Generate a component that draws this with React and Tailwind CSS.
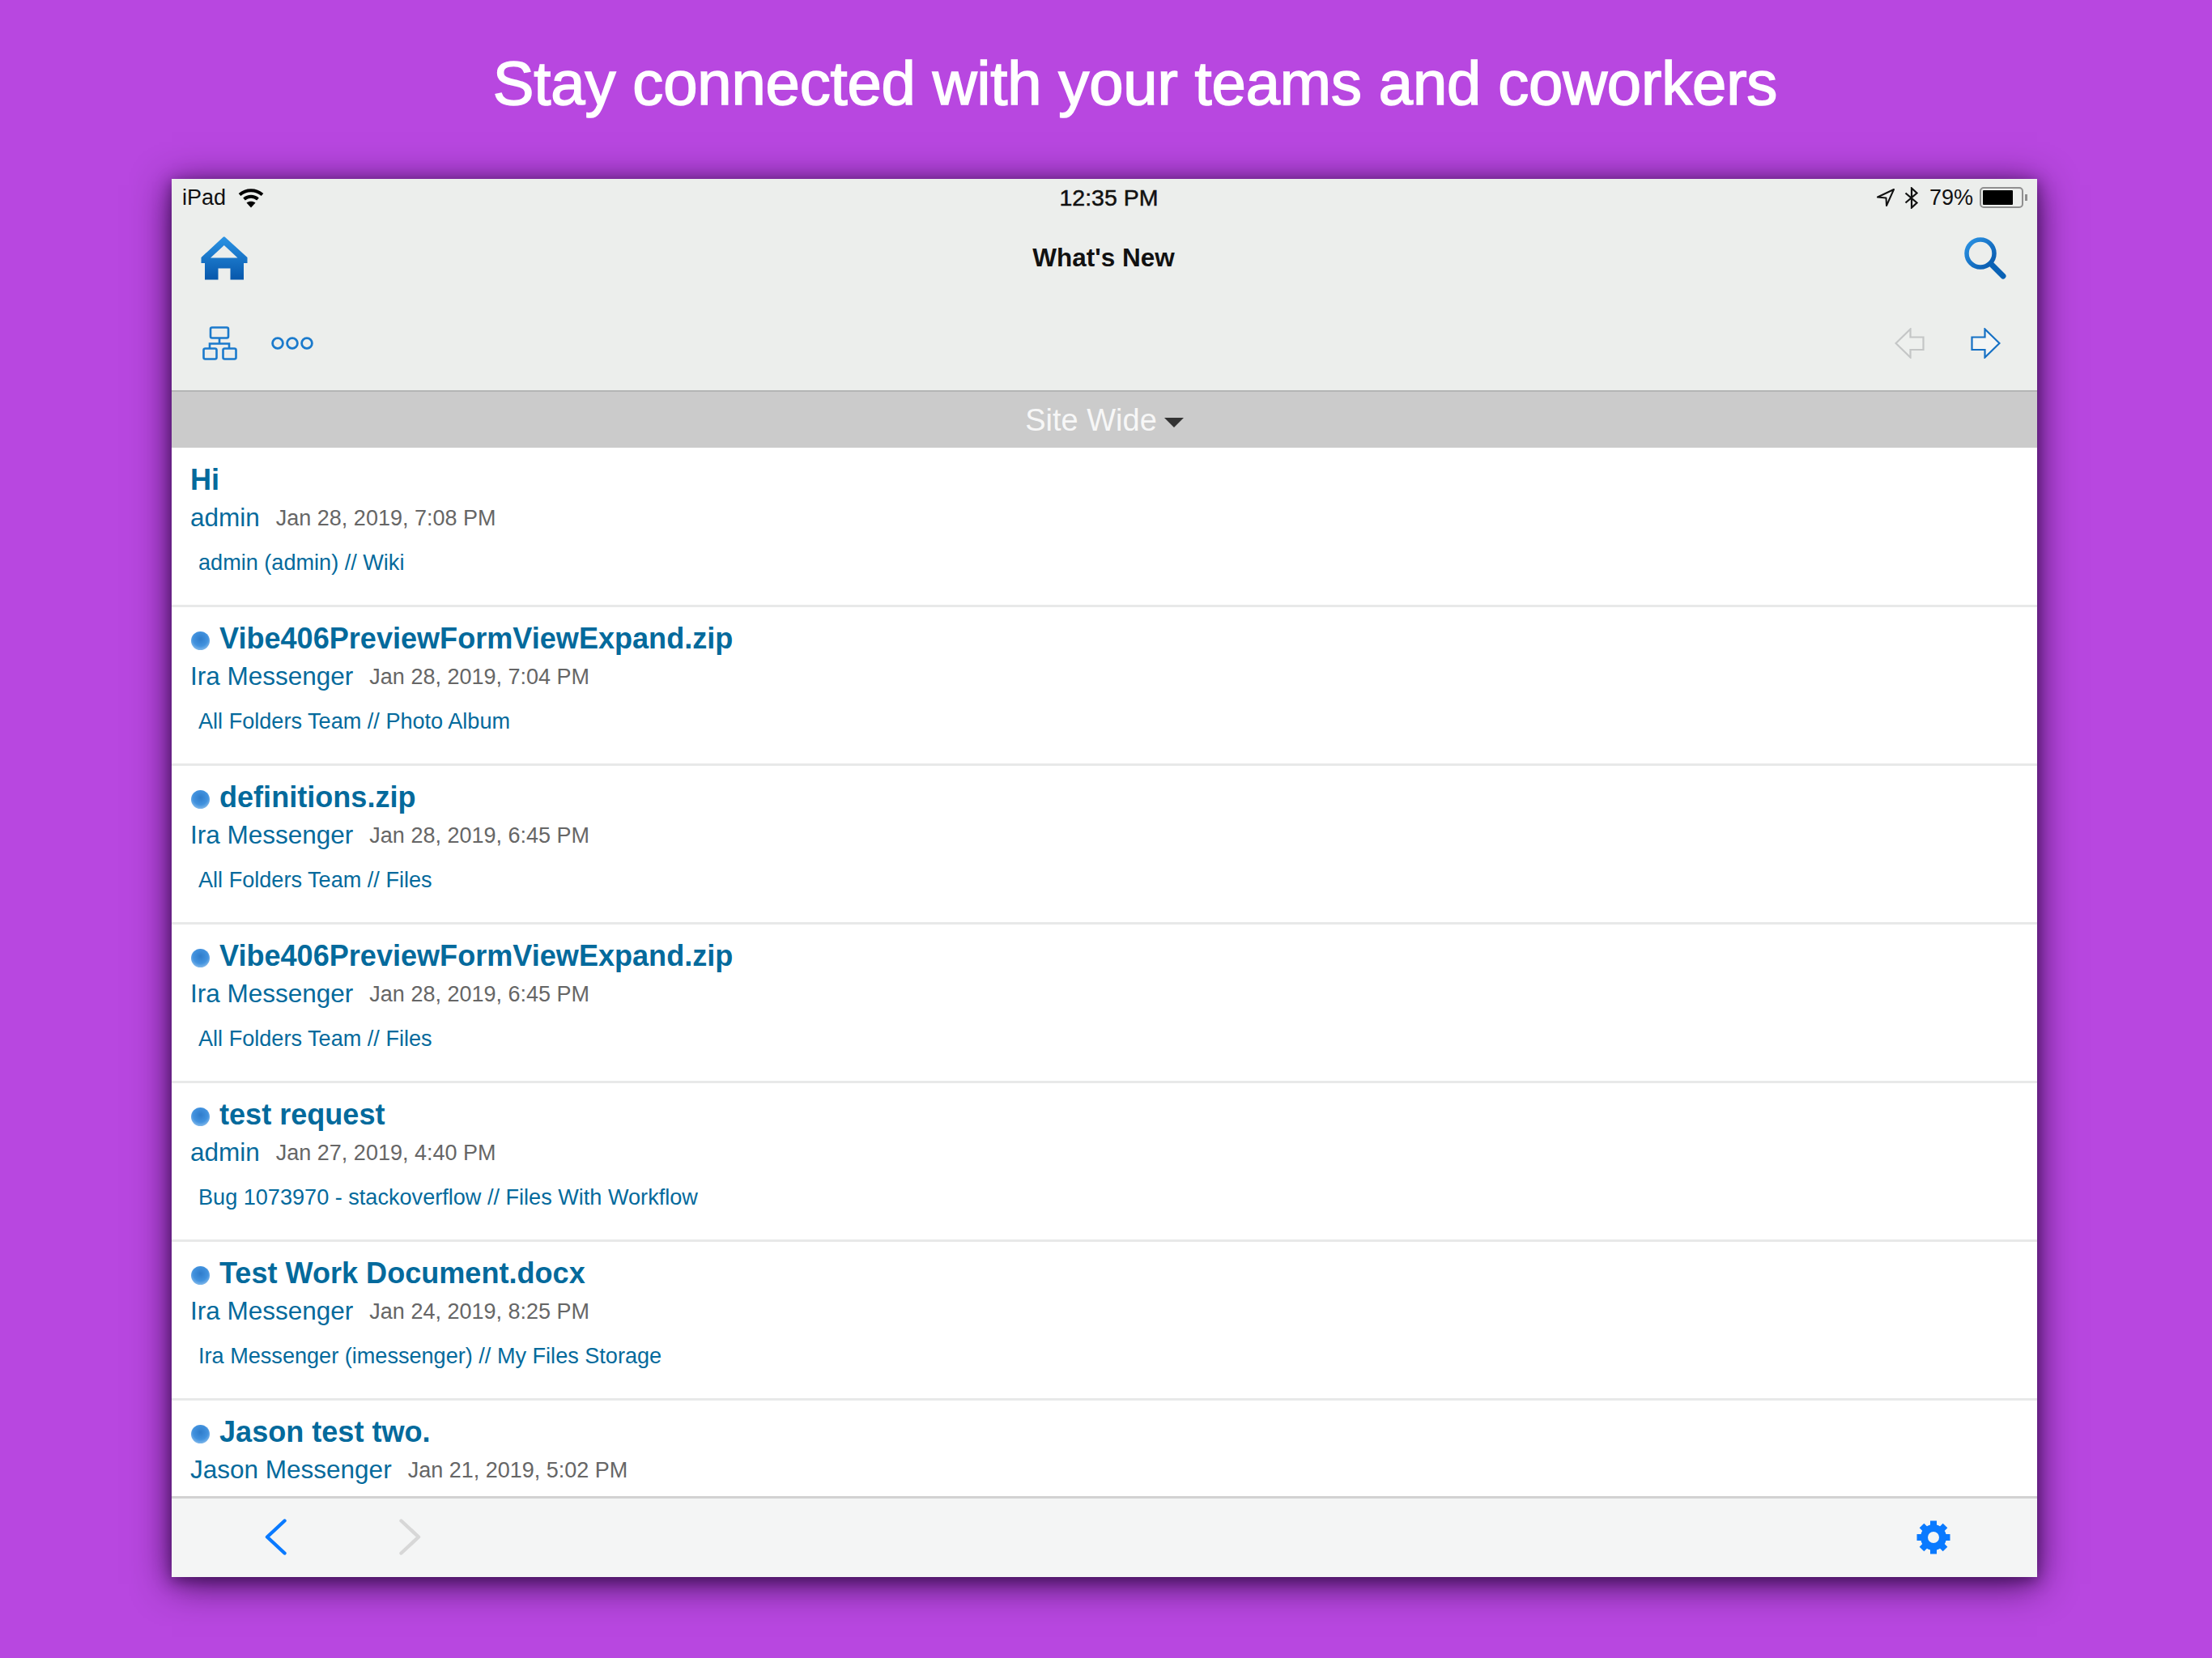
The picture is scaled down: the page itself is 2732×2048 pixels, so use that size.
const rows = [
  { t: "Hi", dot: false, a: "admin", d: "Jan 28, 2019, 7:08 PM", p: "admin (admin) // Wiki" },
  { t: "Vibe406PreviewFormViewExpand.zip", dot: true, a: "Ira Messenger", d: "Jan 28, 2019, 7:04 PM", p: "All Folders Team // Photo Album" },
  { t: "definitions.zip", dot: true, a: "Ira Messenger", d: "Jan 28, 2019, 6:45 PM", p: "All Folders Team // Files" },
  { t: "Vibe406PreviewFormViewExpand.zip", dot: true, a: "Ira Messenger", d: "Jan 28, 2019, 6:45 PM", p: "All Folders Team // Files" },
  { t: "test request", dot: true, a: "admin", d: "Jan 27, 2019, 4:40 PM", p: "Bug 1073970 - stackoverflow // Files With Workflow" },
  { t: "Test Work Document.docx", dot: true, a: "Ira Messenger", d: "Jan 24, 2019, 8:25 PM", p: "Ira Messenger (imessenger) // My Files Storage" },
  { t: "Jason test two.", dot: true, a: "Jason Messenger", d: "Jan 21, 2019, 5:02 PM", p: "" },
];

function Wifi() {
  return (
    <svg width="32" height="25" viewBox="0 0 32 25" fill="none" stroke="#000" strokeWidth="4">
      <path d="M2 8.5C10 1.5 22 1.5 30 8.5" />
      <path d="M7.5 14C12.5 9.7 19.5 9.7 24.5 14" />
      <path d="M16 24.5L10.5 18.5C13.5 16 18.5 16 21.5 18.5Z" fill="#000" stroke="none" />
    </svg>
  );
}

function Home() {
  return (
    <svg width="58" height="54" viewBox="0 0 58 54">
      <defs>
        <linearGradient id="hg" x1="0" y1="0" x2="0" y2="1">
          <stop offset="0" stopColor="#2b93e4" />
          <stop offset="1" stopColor="#0757ab" />
        </linearGradient>
      </defs>
      <path
        fillRule="evenodd"
        fill="url(#hg)"
        d="M28 0.5L29.5 0.5L57.5 26V33H53V53.5H36.5V39.5H21.5V53.5H5V33H0.5V26ZM28.8 11L12 26.5H45.5Z"
      />
    </svg>
  );
}

function Search() {
  return (
    <svg width="52" height="52" viewBox="0 0 52 52" fill="none">
      <defs>
        <linearGradient id="sg" x1="0" y1="0" x2="1" y2="1">
          <stop offset="0" stopColor="#2b93e4" />
          <stop offset="1" stopColor="#0757ab" />
        </linearGradient>
      </defs>
      <circle cx="20" cy="20" r="17" stroke="url(#sg)" strokeWidth="5.5" />
      <path d="M33 33L48 48" stroke="#0a62b5" strokeWidth="7" strokeLinecap="round" />
    </svg>
  );
}

function Org() {
  return (
    <svg width="44" height="42" viewBox="0 0 44 42" fill="none" stroke="#1b7acc" strokeWidth="2.6">
      <rect x="10" y="1.5" width="22" height="13" rx="2" />
      <path d="M21 14.5V21M9 27V21.5H33V27" />
      <rect x="1.5" y="27.5" width="16" height="13" rx="2" />
      <rect x="25.5" y="27.5" width="16" height="13" rx="2" />
    </svg>
  );
}

function Dots() {
  return (
    <svg width="52" height="18" viewBox="0 0 52 18" fill="none" stroke="#1b7acc" strokeWidth="2.8">
      <circle cx="8" cy="9" r="6.4" />
      <circle cx="26" cy="9" r="6.4" />
      <circle cx="44" cy="9" r="6.4" />
    </svg>
  );
}

function ArrowR({ color, flip, fill }) {
  return (
    <svg width="37" height="38" viewBox="0 0 37 38" fill={fill} stroke={color} strokeWidth="2.2" className={flip ? "-scale-x-100" : ""}>
      <path d="M1.5 11.5H17.5V1.5L35.5 19L17.5 36.5V27H1.5Z" />
    </svg>
  );
}

function Gear() {
  const teeth = [0, 45, 90, 135, 180, 225, 270, 315];
  return (
    <svg width="42" height="42" viewBox="0 0 42 42">
      {teeth.map((a) => (
        <rect key={a} x="17" y="0.5" width="8" height="9" fill="#0a7aff" transform={`rotate(${a} 21 21)`} />
      ))}
      <circle cx="21" cy="21" r="11.5" fill="none" stroke="#0a7aff" strokeWidth="9" />
    </svg>
  );
}

function Chevron({ color, flip }) {
  return (
    <svg width="27" height="45" viewBox="0 0 27 45" fill="none" stroke={color} strokeWidth="4.4" strokeLinecap="round" strokeLinejoin="round" className={flip ? "-scale-x-100" : ""}>
      <path d="M24.5 2.5L3 22.5L24.5 42.5" />
    </svg>
  );
}

function Location() {
  return (
    <svg width="22" height="22" viewBox="0 0 22 22" fill="none" stroke="#111" strokeWidth="2" strokeLinejoin="round">
      <path d="M21 1L1 10.5L11.5 11.5L12 21Z" />
    </svg>
  );
}

function Bt() {
  return (
    <svg width="18" height="27" viewBox="0 0 18 27" fill="none" stroke="#111" strokeWidth="2.2">
      <path d="M1.5 7.5L15.5 19.5L9 25.5V1.5L15.5 7.5L1.5 19.5" />
    </svg>
  );
}

function Battery() {
  return (
    <div className="flex items-center">
      <div className="flex h-[26px] w-[54px] items-center rounded-[5px] border-2 border-[#8f8f8f] p-[2px]">
        <div className="h-full w-[37px] rounded-[1px] bg-black" />
      </div>
      <div className="ml-[2px] h-[8px] w-[3px] bg-[#8f8f8f]" />
    </div>
  );
}

function Row({ r }) {
  return (
    <div className="h-[196px] shrink-0 border-b-[3px] border-[#e8e9e9] pl-[23px] pt-[17px]">
      <div className="flex h-[44px] items-center text-[36.1px] font-bold leading-[44px] text-[#046a9c]">
        {r.dot && (
          <span className="mr-[12px] ml-[1px] mt-[4px] h-[23px] w-[23px] rounded-full bg-[radial-gradient(circle_at_50%_40%,#2f7ccb_0%,#4292de_50%,#b5d8f6_100%)]" />
        )}
        <span>{r.t}</span>
      </div>
      <div className="mt-[3px] flex h-[44px] items-center">
        <span className="text-[31.5px] text-[#046a9c]">{r.a}</span>
        <span className="ml-[20px] text-[27px] text-[#666666]">{r.d}</span>
      </div>
      <div className="ml-[10px] mt-[11px] flex h-[44px] items-center text-[27.1px] text-[#046a9c]">{r.p}</div>
    </div>
  );
}

export default function App() {
  return (
    <div className="h-[2048px] w-[2732px] overflow-hidden bg-[#b847e0] font-['Liberation_Sans',Arial,sans-serif]">
      <div className="flex h-[221px] items-start justify-center pl-[72px] pt-[55px] text-[76px] leading-[96px] tracking-[-0.14px] text-white [-webkit-text-stroke:1.6px_#ffffff]">
        Stay connected with your teams and coworkers
      </div>
      <div className="ml-[212px] flex h-[1727px] w-[2304px] flex-col overflow-hidden bg-white shadow-[0_8px_44px_rgba(40,5,60,0.85),0_4px_16px_rgba(40,5,60,0.5)]">
        <div className="h-[263px] shrink-0 border-b-[2px] border-[#b4b5b5] bg-[#eceeec]">
          <div className="grid h-[44px] grid-cols-[1fr_auto_1fr] items-center pl-[13px] pr-[12px] pt-[2px] text-[27px] text-[#111]">
            <div className="flex items-center gap-[15px]">
              <span>iPad</span>
              <Wifi />
            </div>
            <span className="pl-[10px] text-[28.5px] font-medium [-webkit-text-stroke:0.5px_#111]">12:35 PM</span>
            <div className="flex items-center justify-end">
              <Location />
              <span className="ml-[12px] flex">
                <Bt />
              </span>
              <span className="ml-[13px]">79%</span>
              <span className="ml-[8px] flex">
                <Battery />
              </span>
            </div>
          </div>
          <div className="mt-[25px] grid h-[58px] grid-cols-[1fr_auto_1fr] items-center pl-[36px] pr-[38px]">
            <Home />
            <span className="text-[31.5px] font-bold text-[#111]">What's New</span>
            <div className="flex justify-end">
              <Search />
            </div>
          </div>
          <div className="mt-[48px] flex h-[56px] items-center pl-[38px] pr-[45px]">
            <Org />
            <span className="ml-[41px] flex">
              <Dots />
            </span>
            <div className="ml-auto flex items-center gap-[57px]">
              <ArrowR color="#c4c6c6" flip fill="#eef0ee" />
              <ArrowR color="#1570c4" fill="#f3f5f5" />
            </div>
          </div>
        </div>
        <div className="flex h-[69px] shrink-0 items-center justify-center bg-[#cbcbcb] pt-[1px] text-[38px] text-[#f7f7f7]">
          <span>Site Wide</span>
          <span className="ml-[9px] mt-[6px] h-0 w-0 border-x-[12px] border-t-[12px] border-x-transparent border-t-[#333]" />
        </div>
        <div className="min-h-0 flex-1 overflow-hidden pt-[1px]">
          {rows.map((r, i) => (
            <Row key={i} r={r} />
          ))}
        </div>
        <div className="flex h-[100px] shrink-0 items-center border-t-[3px] border-[#d2d2d2] bg-[#f4f5f5] pb-[2px] pl-[115px] pr-[107px]">
          <Chevron color="#0a7aff" />
          <span className="ml-[139px] flex">
            <Chevron color="#d7d7d7" flip />
          </span>
          <span className="ml-auto flex">
            <Gear />
          </span>
        </div>
      </div>
    </div>
  );
}
